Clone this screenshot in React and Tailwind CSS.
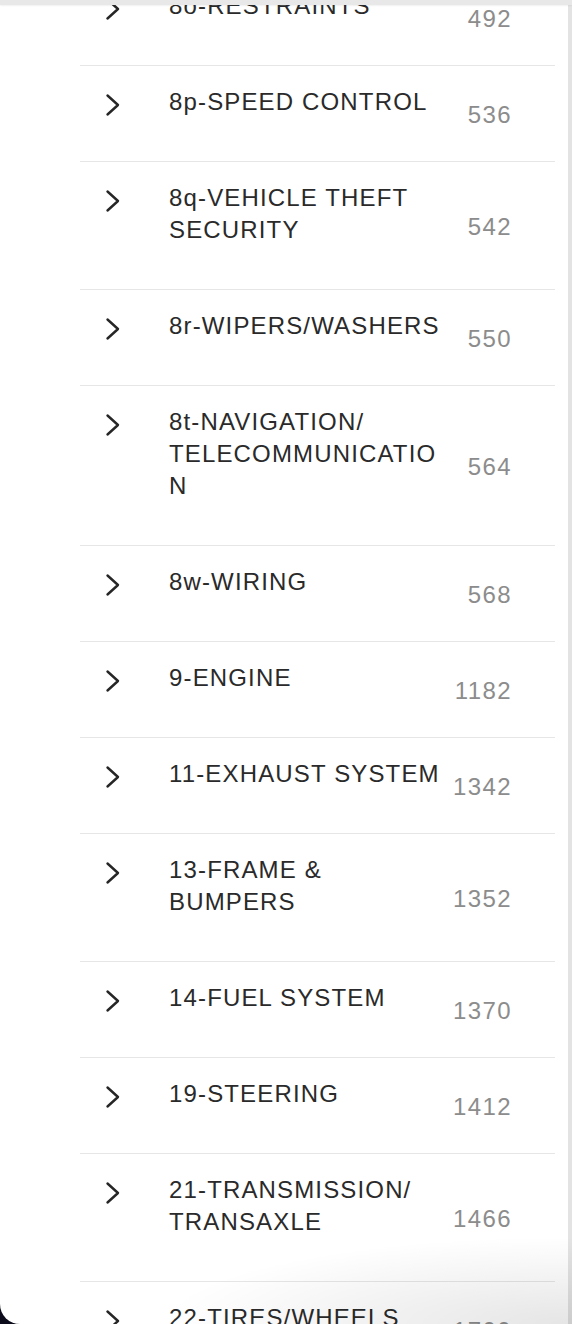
import React from "react";

const rows = [
  { label: "8o-RESTRAINTS", num: "492" },
  { label: "8p-SPEED CONTROL", num: "536" },
  { label: "8q-VEHICLE THEFT SECURITY", num: "542" },
  { label: "8r-WIPERS/WASHERS", num: "550" },
  { label: "8t-NAVIGATION/\u200BTELECOMMUNICATION", num: "564" },
  { label: "8w-WIRING", num: "568" },
  { label: "9-ENGINE", num: "1182" },
  { label: "11-EXHAUST SYSTEM", num: "1342" },
  { label: "13-FRAME & BUMPERS", num: "1352" },
  { label: "14-FUEL SYSTEM", num: "1370" },
  { label: "19-STEERING", num: "1412" },
  { label: "21-TRANSMISSION/\u200BTRANSAXLE", num: "1466" },
  { label: "22-TIRES/WHEELS", num: "1700" },
];

function Chevron() {
  return (
    <svg width="16" height="24" viewBox="0 0 16 24" fill="none">
      <polyline
        points="2.5,2.5 13,12 2.5,21.5"
        stroke="#262626"
        strokeWidth="2.4"
        strokeLinecap="round"
        strokeLinejoin="round"
      />
    </svg>
  );
}

export default function App() {
  return (
    <div
      className="relative w-[572px] h-[1324px] overflow-hidden bg-[#0b0b1c]"
      style={{ fontFamily: '"Liberation Sans", Arial, sans-serif' }}
    >
      <div className="relative flex h-full overflow-hidden rounded-bl-[20px] bg-white">
        <div className="flex-1">
          <div className="ml-[80px] mt-[-30px] w-[475px]">
            {rows.map((r) => (
              <div key={r.label} className="flex border-b border-[#e6e6e6]">
                <div className="w-[89px] shrink-0 pl-[25px] pt-[27px]">
                  <Chevron />
                </div>
                <div className="w-[276px] shrink-0 break-words pt-[20px] pb-[43px] text-[24px] leading-[32px] tracking-[1.15px] text-[#2a2a2a]">
                  {r.label}
                </div>
                <div className="flex-1 self-center pt-[2px] pr-[43px] text-right text-[24px] leading-[32px] tracking-[1.4px] text-[#8c8c8c]">
                  {r.num}
                </div>
              </div>
            ))}
          </div>
        </div>
        <div className="w-[4px] shrink-0 bg-[#e3e3e3]" />
        <div className="pointer-events-none absolute left-0 right-0 top-0 h-[5px] bg-[#e8e8e8] shadow-[0_1px_2px_rgba(0,0,0,0.06)]" />
        <div className="pointer-events-none absolute bottom-0 left-0 right-0 h-[110px] bg-[radial-gradient(ellipse_90%_100%_at_100%_100%,rgba(0,0,0,0.1),rgba(0,0,0,0)_80%)]" />
      </div>
    </div>
  );
}
